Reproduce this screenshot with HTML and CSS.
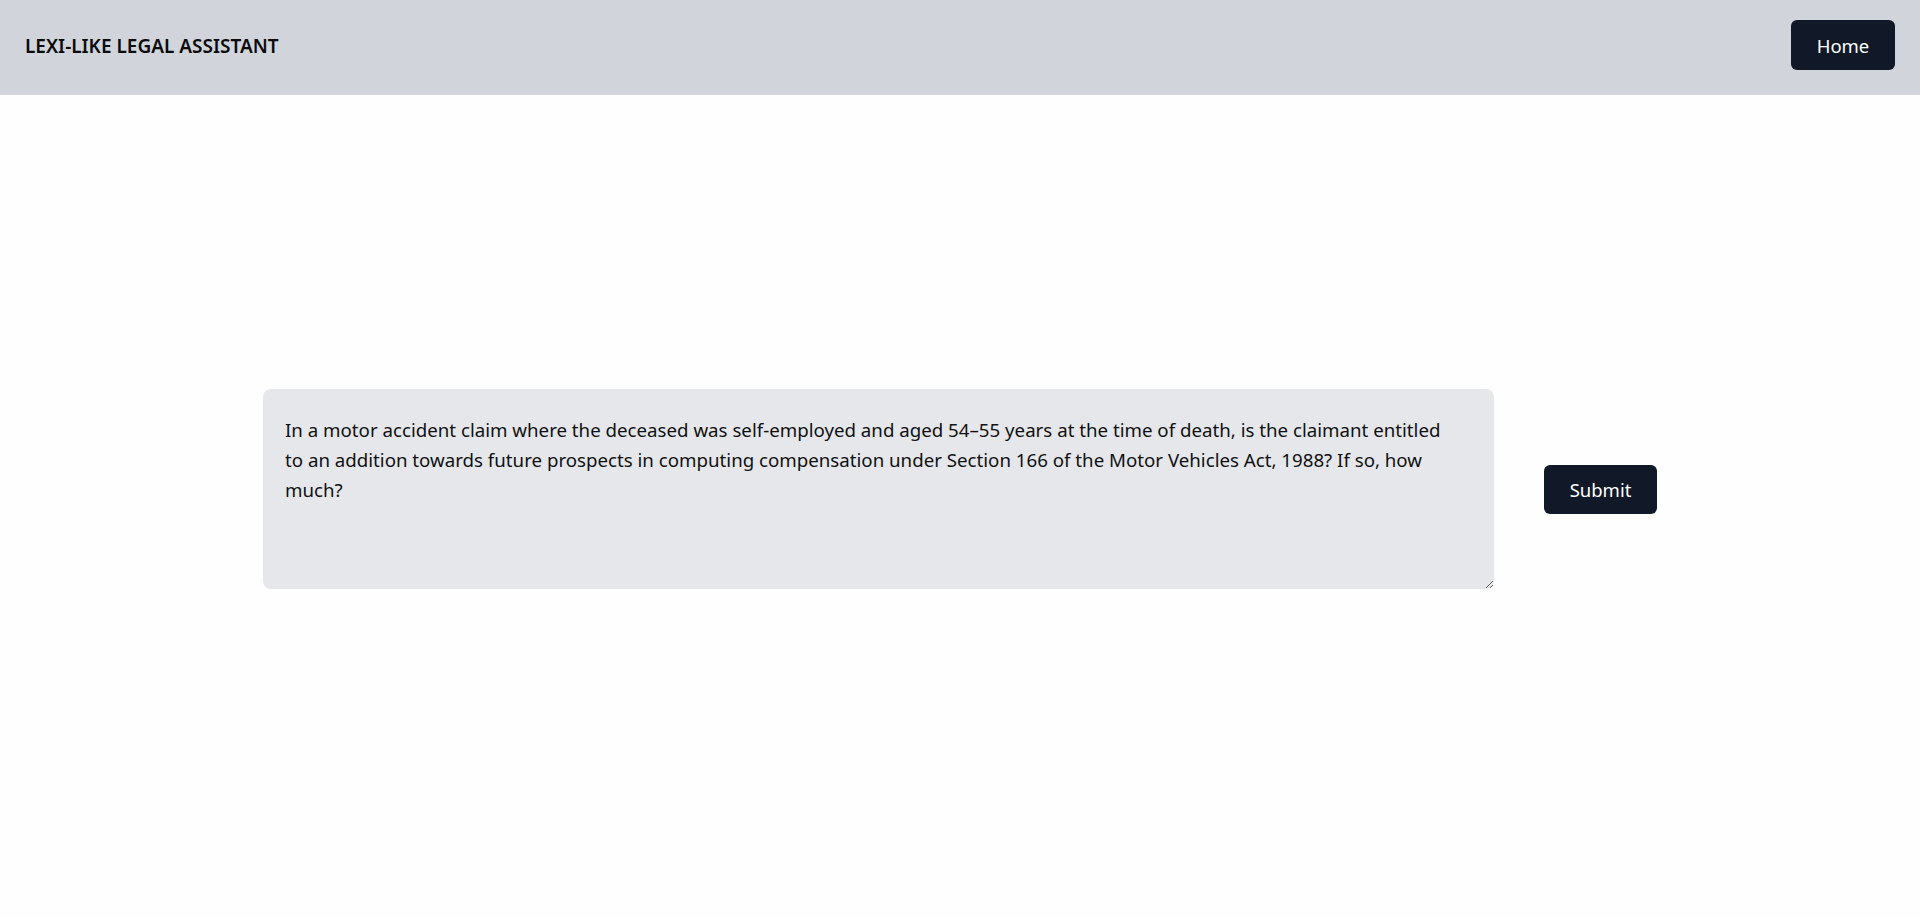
FILE: index.html
```html
<!DOCTYPE html>
<html lang="en">
<head>
<meta charset="utf-8">
<title>Lexi-like Legal Assistant</title>
<link rel="stylesheet" href="styles.css">
</head>
<body>
<header class="topbar">
  <div class="brand">LEXI-LIKE LEGAL ASSISTANT</div>
  <button class="btn btn-home" type="button">Home</button>
</header>
<main class="main">
  <form class="ask-form">
    <textarea class="question">In a motor accident claim where the deceased was self-employed and aged 54–55 years at the time of death, is the claimant entitled to an addition towards future prospects in computing compensation under Section 166 of the Motor Vehicles Act, 1988? If so, how much?</textarea>
    <button class="btn btn-submit" type="button">Submit</button>
  </form>
</main>
</body>
</html>
```

FILE: styles.css
```css
* { box-sizing: border-box; }
html, body { margin: 0; padding: 0; }
body {
  background: #fefefe;
  font-family: "Noto Sans", "Open Sans", sans-serif;
  color: #111;
}
.topbar {
  height: 95px;
  background: #d1d5db;
  display: flex;
  align-items: center;
  justify-content: space-between;
  padding: 0 25px 0 25px;
}
.brand {
  font-size: 19px;
  font-weight: 600;
  color: #0b0b0b;
  margin-top: -3px;
}
.btn {
  background: #111827;
  color: #fff;
  border: none;
  border-radius: 6px;
  font-family: inherit;
  font-size: 18.5px;
  cursor: pointer;
  display: flex;
  align-items: center;
  justify-content: center;
}
.btn-home {
  width: 104px;
  height: 50px;
  margin-top: -5px;
}
.main {
  padding-top: 294px;
  display: flex;
  justify-content: center;
}
.ask-form {
  display: flex;
  align-items: center;
  gap: 50px;
}
.question {
  width: 1231px;
  height: 200px;
  background: #e5e7eb;
  border: none;
  border-radius: 8px;
  padding: 26px 37px 23px 22px;
  font-family: inherit;
  font-size: 18.7px;
  line-height: 30px;
  color: #111;
  resize: vertical;
  outline: none;
}
.btn-submit {
  width: 113px;
  height: 49px;
}
```
